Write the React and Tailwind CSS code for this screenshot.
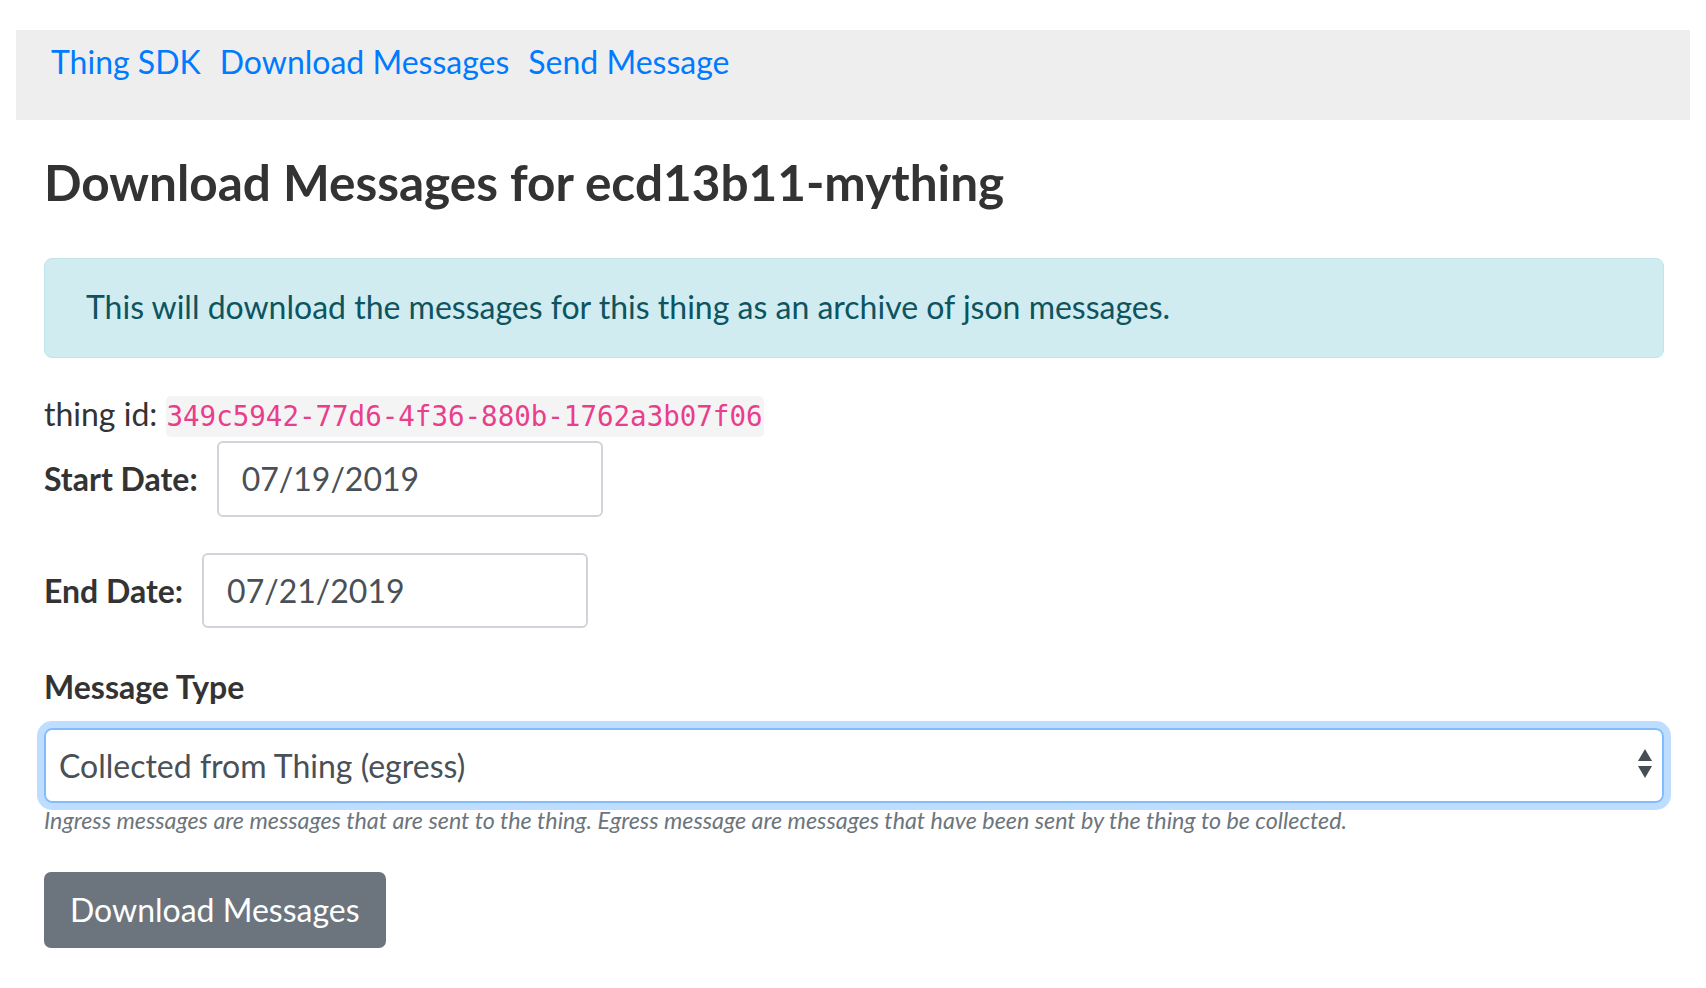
import React from "react";

export default function App() {
  const lato = { fontFamily: "Lato, 'Noto Sans', sans-serif" };
  return (
    <div className="min-h-[988px] bg-white pt-[30px] px-[16px] text-[#333]" style={lato}>
      <nav className="h-[90px] bg-[#eeeeee] pt-[13px] pl-[35px] flex items-start gap-[19px] text-[32px] leading-[38px] text-[#007bff]">
        <a href="#" className="text-[#007bff]">Thing SDK</a>
        <a href="#" className="text-[#007bff]">Download Messages</a>
        <a href="#" className="text-[#007bff]">Send Message</a>
      </nav>

      <main className="ml-[28px] mr-[26px]">
        <h1 className="mt-[31px] text-[49.5px] leading-[62px] font-bold text-[#333]">
          Download Messages for ecd13b11-mything
        </h1>

        <div className="mt-[45px] box-border h-[100px] rounded-[8px] border border-[#bee5eb] bg-[#d1ecf1] pt-[24px] pl-[41px] text-[32px] leading-[48px] text-[#0c5460]">
          This will download the messages for this thing as an archive of json messages.
        </div>

        <div className="mt-[32px] text-[32px] leading-[48px] text-[#333]">
          thing id:{" "}
          <code
            className="inline-block h-[41px] px-[1px] rounded-[5px] bg-[#f4f4f4] text-[27.5px] leading-[41px] text-[#e83e8c] align-baseline"
            style={{ fontFamily: "'DejaVu Sans Mono', monospace" }}
          >
            349c5942-77d6-4f36-880b-1762a3b07f06
          </code>
        </div>

        <div className="mt-[3px] flex items-center gap-[19px]">
          <span className="text-[32px] leading-[48px] font-bold text-[#333]">Start Date:</span>
          <div className="box-border h-[76px] w-[386px] rounded-[6px] border-2 border-[#ced4da] pl-[23px] flex items-center text-[32px] text-[#495057]">
            07/19/2019
          </div>
        </div>

        <div className="mt-[36px] flex items-center gap-[19px]">
          <span className="text-[32px] leading-[48px] font-bold text-[#333]">End Date:</span>
          <div className="box-border h-[75px] w-[386px] rounded-[6px] border-2 border-[#ced4da] pl-[23px] flex items-center text-[32px] text-[#495057]">
            07/21/2019
          </div>
        </div>

        <div className="mt-[35px] text-[32px] leading-[48px] font-bold text-[#333]">Message Type</div>

        <div className="mt-[17px] box-border h-[75px] rounded-[8px] border-2 border-[#80bdff] shadow-[0_0_0_7px_rgba(0,123,255,0.25)] pl-[13px] pr-[9px] flex items-center justify-between text-[32px] text-[#495057]">
          <span>Collected from Thing (egress)</span>
          <svg width="16" height="30" viewBox="0 0 16 30" className="mb-[4px]">
            <polygon points="8,0 15,12 1,12" fill="#474d55" />
            <polygon points="1,17 15,17 8,29" fill="#474d55" />
          </svg>
        </div>

        <p className="mt-[1px] text-[23.3px] leading-[32px] italic text-[#6c757d]">
          Ingress messages are messages that are sent to the thing. Egress message are messages that have been sent by the thing to be collected.
        </p>

        <button className="mt-[36px] box-border h-[76px] rounded-[7px] bg-[#6c757d] px-[26px] text-[32px] text-white">
          Download Messages
        </button>
      </main>
    </div>
  );
}
